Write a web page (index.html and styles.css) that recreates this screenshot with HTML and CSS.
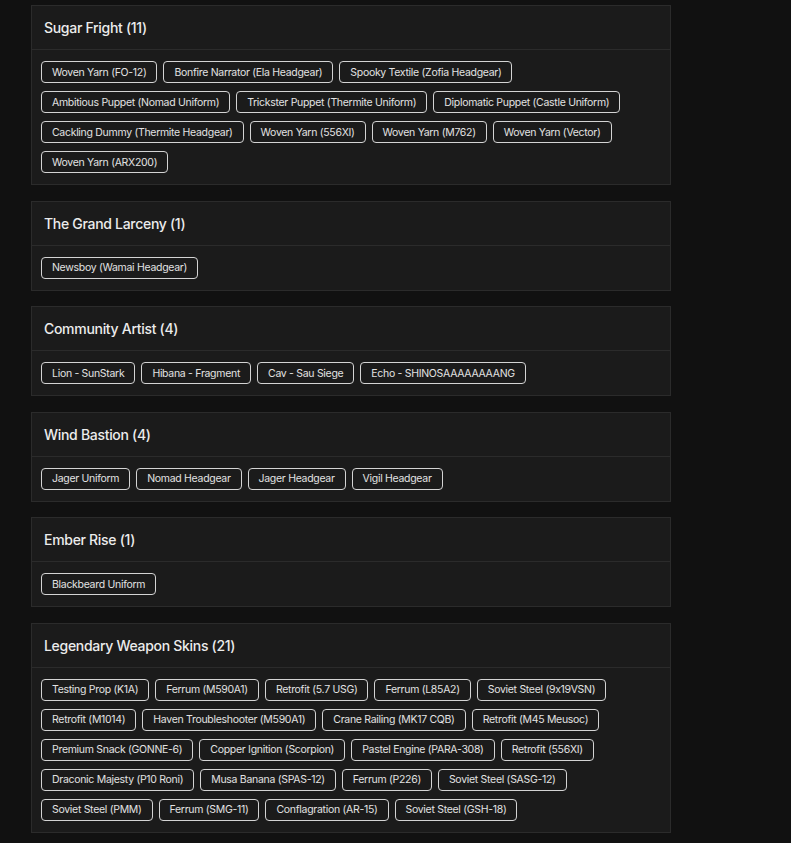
FILE: index.html
```html
<!DOCTYPE html>
<html>
<head>
<meta charset="utf-8">
<link rel="stylesheet" href="styles.css">
</head>
<body>
<div class="page">
  <section class="card">
    <h2 class="card-title">Sugar Fright (11)</h2>
    <div class="chips">
      <span class="chip">Woven Yarn (FO-12)</span>
      <span class="chip">Bonfire Narrator (Ela Headgear)</span>
      <span class="chip">Spooky Textile (Zofia Headgear)</span>
      <span class="chip">Ambitious Puppet (Nomad Uniform)</span>
      <span class="chip">Trickster Puppet (Thermite Uniform)</span>
      <span class="chip">Diplomatic Puppet (Castle Uniform)</span>
      <span class="chip">Cackling Dummy (Thermite Headgear)</span>
      <span class="chip">Woven Yarn (556XI)</span>
      <span class="chip">Woven Yarn (M762)</span>
      <span class="chip">Woven Yarn (Vector)</span>
      <span class="chip">Woven Yarn (ARX200)</span>
    </div>
  </section>
  <section class="card">
    <h2 class="card-title">The Grand Larceny (1)</h2>
    <div class="chips">
      <span class="chip">Newsboy (Wamai Headgear)</span>
    </div>
  </section>
  <section class="card">
    <h2 class="card-title">Community Artist (4)</h2>
    <div class="chips">
      <span class="chip">Lion - SunStark</span>
      <span class="chip">Hibana - Fragment</span>
      <span class="chip">Cav - Sau Siege</span>
      <span class="chip">Echo - SHINOSAAAAAAAANG</span>
    </div>
  </section>
  <section class="card">
    <h2 class="card-title">Wind Bastion (4)</h2>
    <div class="chips">
      <span class="chip">Jager Uniform</span>
      <span class="chip">Nomad Headgear</span>
      <span class="chip">Jager Headgear</span>
      <span class="chip">Vigil Headgear</span>
    </div>
  </section>
  <section class="card">
    <h2 class="card-title">Ember Rise (1)</h2>
    <div class="chips">
      <span class="chip">Blackbeard Uniform</span>
    </div>
  </section>
  <section class="card">
    <h2 class="card-title">Legendary Weapon Skins (21)</h2>
    <div class="chips">
      <span class="chip">Testing Prop (K1A)</span>
      <span class="chip">Ferrum (M590A1)</span>
      <span class="chip">Retrofit (5.7 USG)</span>
      <span class="chip">Ferrum (L85A2)</span>
      <span class="chip">Soviet Steel (9x19VSN)</span>
      <span class="chip">Retrofit (M1014)</span>
      <span class="chip">Haven Troubleshooter (M590A1)</span>
      <span class="chip">Crane Railing (MK17 CQB)</span>
      <span class="chip">Retrofit (M45 Meusoc)</span>
      <span class="chip">Premium Snack (GONNE-6)</span>
      <span class="chip">Copper Ignition (Scorpion)</span>
      <span class="chip">Pastel Engine (PARA-308)</span>
      <span class="chip">Retrofit (556XI)</span>
      <span class="chip">Draconic Majesty (P10 Roni)</span>
      <span class="chip">Musa Banana (SPAS-12)</span>
      <span class="chip">Ferrum (P226)</span>
      <span class="chip">Soviet Steel (SASG-12)</span>
      <span class="chip">Soviet Steel (PMM)</span>
      <span class="chip">Ferrum (SMG-11)</span>
      <span class="chip">Conflagration (AR-15)</span>
      <span class="chip">Soviet Steel (GSH-18)</span>
    </div>
  </section>
</div>
</body>
</html>
```
FILE: styles.css
```css
html, body {
  margin: 0;
  padding: 0;
  background: #111111;
}
body {
  font-family: "Inter", "Open Sans", sans-serif;
  font-feature-settings: "calt" 0;
  color: #e6e6e6;
}
.page {
  padding: 5px 0 0 31px;
  width: 640px;
  display: flex;
  flex-direction: column;
  gap: 15.6px;
}
.card {
  background: #1b1b1b;
  border: 1px solid #2b2b2b;
}
.card-title {
  margin: 0;
  height: 43px;
  display: flex;
  align-items: center;
  padding: 0 12px;
  font-size: 14px;
  font-weight: 500;
  letter-spacing: -0.3px;
  color: #ececec;
  border-bottom: 1px solid #2b2b2b;
}
.chips {
  display: flex;
  flex-wrap: wrap;
  gap: 8px 6px;
  padding: 11px 9px 11px;
}
.chip {
  height: 22px;
  box-sizing: border-box;
  display: inline-flex;
  align-items: center;
  padding: 0 10px;
  border: 1px solid #d4d4d4;
  border-radius: 4px;
  font-size: 10.5px;
  letter-spacing: -0.3px;
  color: #e2e2e2;
  white-space: nowrap;
}
```
